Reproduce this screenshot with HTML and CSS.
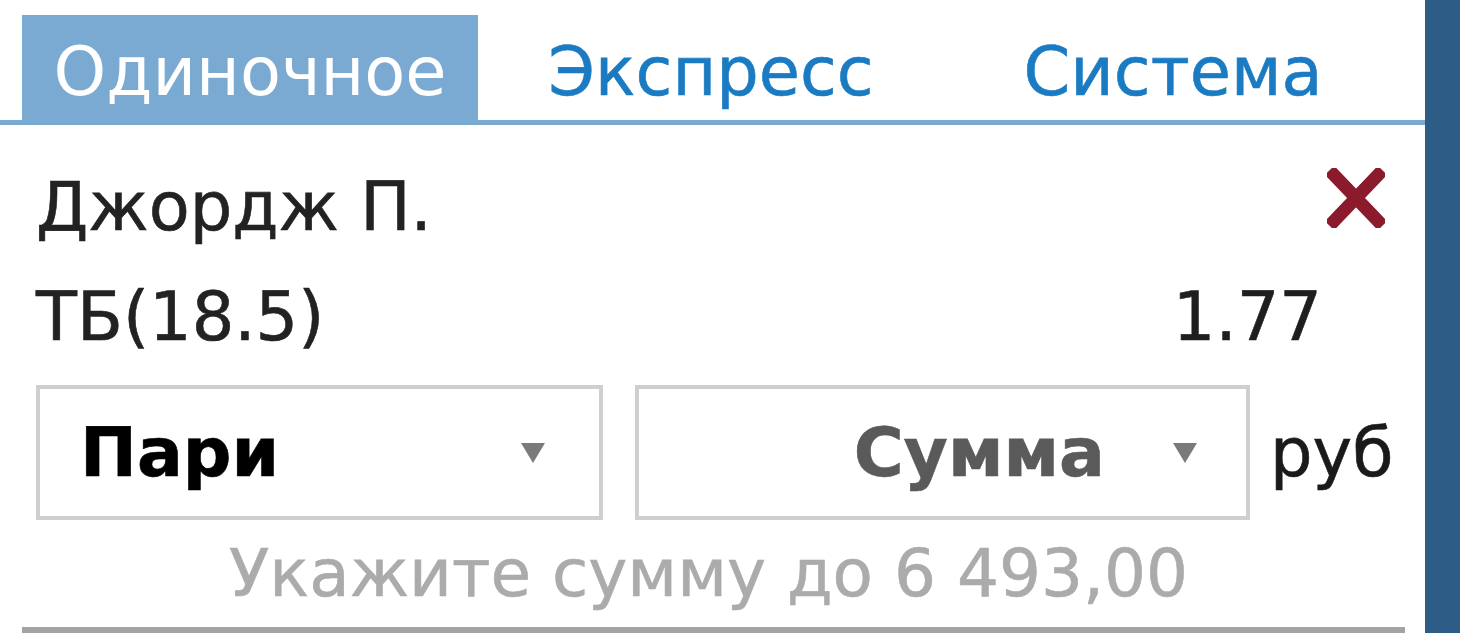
FILE: index.html
```html
<!DOCTYPE html>
<html lang="ru">
<head>
    <meta charset="utf-8" />
    <title>Купон</title>
    <link rel="stylesheet" href="styles.css">
</head>
<body>
<div class="coupon">
    <div class="coupon_main">
        <ul class="tabs">
            <li class="tab current">Одиночное</li>
            <li class="tab">Экспресс</li>
            <li class="tab">Система</li>
        </ul>
        <div class="bet">
            <div class="bet_row bet_row_first">
                <span class="bet_name">Джордж П.</span>
                <a href="javascript:;" class="bet_del" title="Удалить">
                    <svg width="58" height="60" viewBox="0 0 58 60"><path d="M7 7 L51 53 M51 7 L7 53" stroke="#8b1a2c" stroke-width="13" stroke-linecap="square" fill="none"/></svg>
                </a>
            </div>
            <div class="bet_row">
                <span class="bet_type">ТБ(18.5)</span>
                <span class="bet_coef">1.77</span>
            </div>
            <div class="bet_inputs">
                <div class="select select_kind"><b>Пари</b><i class="arrow"></i></div>
                <div class="select select_sum"><b>Сумма</b><i class="arrow"></i></div>
                <span class="currency">руб</span>
            </div>
            <div class="bet_hint">Укажите сумму до 6 493,00</div>
        </div>
    </div>
    <div class="coupon_side"></div>
</div>
</body>
</html>
```

FILE: styles.css
```css
html, body {margin: 0; padding: 0; background: #fff;}
body {font-family: "DejaVu Sans", Verdana, sans-serif; font-size: 67px; color: #1e1e1e; -webkit-text-stroke: 0.6px currentColor;}
.coupon {display: flex; width: 1460px; height: 633px; overflow: hidden;}
.coupon_main {width: 1425px; flex: none;}
.coupon_side {flex: 1; background: #2d5d87;}

.tabs {list-style: none; margin: 0; padding: 15px 0 0 22px; display: flex; border-bottom: 5px solid #7aaad2; height: 105px;}
.tab {width: 456px; text-align: center; padding-top: 10px; line-height: 95px; font-size: 67px; color: #1b7bc2;}
.tab.current {background: #7aaad2; color: #fff; -webkit-text-stroke: 0;}
.tab:nth-child(2) {text-indent: 10px;}
.tab:nth-child(3) {text-indent: 22px;}

.bet {padding: 0 20px 0 36px;}
.bet_row {display: flex; justify-content: space-between; align-items: center; height: 110px; line-height: 110px; margin-right: 20px;}
.bet_row_first {margin-top: 27px;}
.bet_name, .bet_type {color: #222;}
.bet_del {display: block; line-height: 0; margin-bottom: 18px; margin-right: 0;}
.bet_coef {margin-right: 63px;}

.bet_inputs {display: flex; align-items: center; margin-top: 13px;}
.select {position: relative; flex: none; box-sizing: border-box; height: 135px; border: 4px solid #cfcfcf; display: flex; align-items: center;}
.select b {font-weight: bold; font-size: 68px;}
.select_kind {width: 567px; padding-left: 40px; color: #000;}
.select_sum {width: 615px; margin-left: 32px; justify-content: flex-end; padding-right: 141px; color: #5a5a5a;}
.arrow {position: absolute; top: 54px; right: 54px; width: 0; height: 0; border-left: 12px solid transparent; border-right: 12px solid transparent; border-top: 20px solid #7a7a7a; -webkit-text-stroke: 0;}
.select_sum .arrow {right: 49px;}
.currency {margin-left: 20px; color: #1a1a1a;}

.bet_hint {text-align: center; color: #ababab; height: 107px; line-height: 108px; font-size: 66px; border-bottom: 6px solid #a3a3a3; margin-left: -14px; margin-right: 0; padding-right: 10px;}
```
